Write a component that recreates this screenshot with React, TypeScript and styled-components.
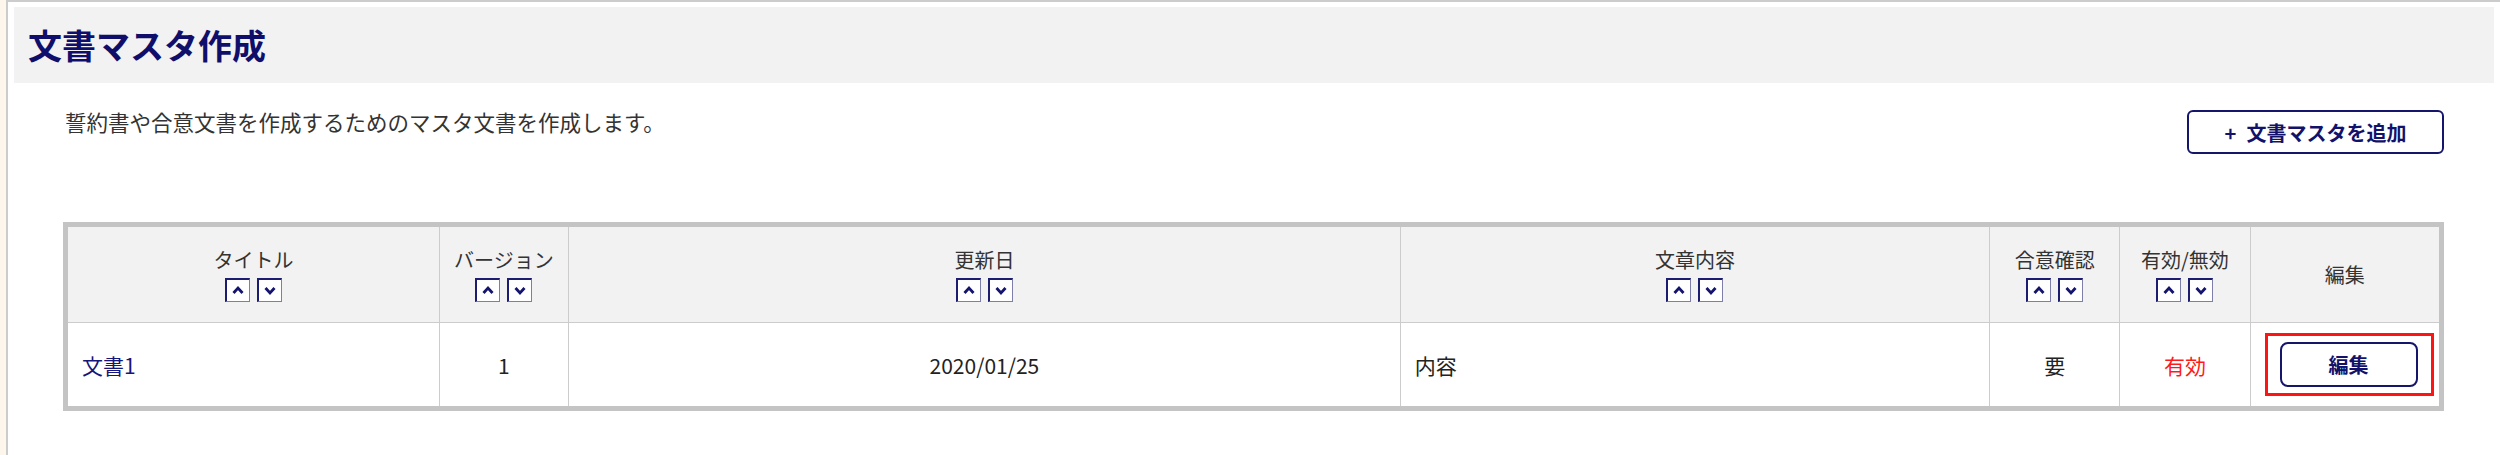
import styled, { createGlobalStyle } from 'styled-components';

type SortColumn = {
    label: string;
    width: number;
    sortable: boolean;
};

type CellProps = {
    align?: 'left' | 'center';
};

const GlobalStyle = createGlobalStyle`
    html, body {
        margin: 0;
        padding: 0;
        background: #fdf6ec;
        font-family: "Noto Sans CJK JP", "Noto Sans", sans-serif;
        color: #333333;
    }
`;

const Page = styled.div`
    margin-left: 6px;
    min-height: 453px;
    background: #ffffff;
    border-left: 2px solid #cccccc;
    border-top: 2px solid #cccccc;
    padding: 5px 6px 0 6px;
`;

const PageHeader = styled.div`
    height: 76px;
    background: #f2f2f2;
    display: flex;
    align-items: center;
    padding-left: 14px;
`;

const PageTitle = styled.h1`
    margin: 0;
    font-size: 34px;
    line-height: 40px;
    font-weight: 700;
    color: #0f0f6b;
`;

const Content = styled.div`
    padding: 0 50px 0 49px;
`;

const TopRow = styled.div`
    display: flex;
    justify-content: space-between;
    align-items: flex-start;
    margin-top: 27px;
`;

const Description = styled.p`
    margin: 0;
    padding-left: 2px;
    font-size: 21.5px;
    line-height: 24px;
    color: #333333;
`;

const OutlineButton = styled.button`
    font-family: inherit;
    font-weight: 700;
    font-size: 20px;
    color: #12126b;
    background: #ffffff;
    border: 2px solid #15156b;
    cursor: pointer;
    padding: 0;
`;

const AddButton = styled(OutlineButton)`
    width: 257px;
    height: 44px;
    border-radius: 6px;
    display: flex;
    align-items: center;
    justify-content: center;
    gap: 10px;
`;

const EditButton = styled(OutlineButton)`
    width: 138px;
    height: 45px;
    border-radius: 8px;
    display: block;
`;

const Highlight = styled.div`
    display: inline-block;
    border: 3px solid #ff1414;
    padding: 6px 13px 6px 12px;
`;

const Table = styled.table`
    margin-top: 68px;
    width: 2381px;
    table-layout: fixed;
    border-collapse: collapse;
    border: 5px solid #c4c4c4;
`;

const HeadCell = styled.th`
    background: #f2f2f2;
    border: 1px solid #cccccc;
    height: 95px;
    padding: 0;
    font-weight: 400;
    font-size: 20px;
    line-height: 24px;
    color: #333333;
    text-align: center;
    vertical-align: middle;
`;

const SortButtons = styled.div`
    display: flex;
    justify-content: center;
    gap: 7px;
    margin-top: 6px;
`;

const SortButton = styled.span`
    width: 25px;
    height: 24px;
    box-sizing: border-box;
    display: flex;
    align-items: center;
    justify-content: center;
    background: #ffffff;
    border: 2px solid #1c1c70;
    border-right: 1px solid #7e7eaa;
    border-bottom: 1px solid #7e7eaa;
`;

const BodyCell = styled.td<CellProps>`
    border: 1px solid #cccccc;
    height: 83px;
    padding: 0 14px;
    font-size: 21px;
    line-height: 24px;
    color: #222222;
    text-align: ${(props) => props.align || 'center'};
    vertical-align: middle;
`;

const TitleLink = styled.a`
    color: #16167a;
    text-decoration: none;
`;

const StatusText = styled.span`
    color: #ff1a1a;
`;

const Chevron = ({ up }: { up: boolean }) => (
    <svg width="14" height="14" viewBox="0 0 14 14">
        <polyline
            points={up ? '2.5,10 7,5 11.5,10' : '2.5,5 7,10 11.5,5'}
            fill="none"
            stroke="#14146e"
            strokeWidth="2.8"
        />
    </svg>
);

const columns: SortColumn[] = [
    { label: 'タイトル', width: 373, sortable: true },
    { label: 'バージョン', width: 129, sortable: true },
    { label: '更新日', width: 830, sortable: true },
    { label: '文章内容', width: 588, sortable: true },
    { label: '合意確認', width: 130, sortable: true },
    { label: '有効/無効', width: 130, sortable: true },
    { label: '編集', width: 191, sortable: false },
];

const App = () => {
    return (
        <>
            <GlobalStyle />
            <Page>
                <PageHeader>
                    <PageTitle>文書マスタ作成</PageTitle>
                </PageHeader>
                <Content>
                    <TopRow>
                        <Description>
                            誓約書や合意文書を作成するためのマスタ文書を作成します。
                        </Description>
                        <AddButton>
                            <span>+</span>
                            <span>文書マスタを追加</span>
                        </AddButton>
                    </TopRow>
                    <Table>
                        <colgroup>
                            {columns.map((col) => (
                                <col key={col.label} style={{ width: col.width }} />
                            ))}
                        </colgroup>
                        <thead>
                            <tr>
                                {columns.map((col) => (
                                    <HeadCell key={col.label}>
                                        <div>{col.label}</div>
                                        {col.sortable && (
                                            <SortButtons>
                                                <SortButton>
                                                    <Chevron up />
                                                </SortButton>
                                                <SortButton>
                                                    <Chevron up={false} />
                                                </SortButton>
                                            </SortButtons>
                                        )}
                                    </HeadCell>
                                ))}
                            </tr>
                        </thead>
                        <tbody>
                            <tr>
                                <BodyCell align="left">
                                    <TitleLink href="#">文書1</TitleLink>
                                </BodyCell>
                                <BodyCell>1</BodyCell>
                                <BodyCell>2020/01/25</BodyCell>
                                <BodyCell align="left">内容</BodyCell>
                                <BodyCell>要</BodyCell>
                                <BodyCell>
                                    <StatusText>有効</StatusText>
                                </BodyCell>
                                <BodyCell>
                                    <Highlight>
                                        <EditButton>編集</EditButton>
                                    </Highlight>
                                </BodyCell>
                            </tr>
                        </tbody>
                    </Table>
                </Content>
            </Page>
        </>
    );
};

export default App;
